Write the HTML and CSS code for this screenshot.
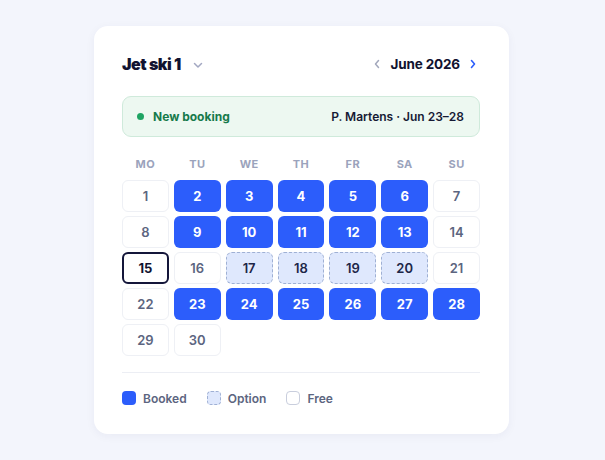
FILE: index.html
```html
<!DOCTYPE html>
<html lang="en">
<head>
<meta charset="utf-8">
<link rel="stylesheet" href="styles.css">
</head>
<body>
<div class="card">
  <div class="header">
    <div class="title">
      <span class="name">Jet ski 1</span>
      <svg class="chev-down" width="12" height="12" viewBox="0 0 12 12"><polyline points="2.5,4.5 6,8 9.5,4.5" fill="none" stroke="#a3a8c2" stroke-width="1.5" stroke-linecap="round" stroke-linejoin="round"/></svg>
    </div>
    <div class="month">
      <svg width="10" height="12" viewBox="0 0 10 12"><polyline points="6.5,2.5 3.5,6 6.5,9.5" fill="none" stroke="#a3a8bc" stroke-width="1.5" stroke-linecap="round" stroke-linejoin="round"/></svg>
      <span class="month-label">June 2026</span>
      <svg width="10" height="12" viewBox="0 0 10 12"><polyline points="3.5,2.5 6.5,6 3.5,9.5" fill="none" stroke="#2c5dfb" stroke-width="1.6" stroke-linecap="round" stroke-linejoin="round"/></svg>
    </div>
  </div>
  <div class="banner">
    <div class="banner-left"><span class="dot"></span><span>New booking</span></div>
    <div class="banner-right">P. Martens · Jun 23–28</div>
  </div>
  <div class="weekdays">
    <span>MO</span><span>TU</span><span>WE</span><span>TH</span><span>FR</span><span>SA</span><span>SU</span>
  </div>
  <div class="grid">
    <div class="day free">1</div>
    <div class="day booked">2</div>
    <div class="day booked">3</div>
    <div class="day booked">4</div>
    <div class="day booked">5</div>
    <div class="day booked">6</div>
    <div class="day free">7</div>
    <div class="day free">8</div>
    <div class="day booked">9</div>
    <div class="day booked">10</div>
    <div class="day booked">11</div>
    <div class="day booked">12</div>
    <div class="day booked">13</div>
    <div class="day free">14</div>
    <div class="day today">15</div>
    <div class="day free">16</div>
    <div class="day option">17</div>
    <div class="day option">18</div>
    <div class="day option">19</div>
    <div class="day option">20</div>
    <div class="day free">21</div>
    <div class="day free">22</div>
    <div class="day booked">23</div>
    <div class="day booked">24</div>
    <div class="day booked">25</div>
    <div class="day booked">26</div>
    <div class="day booked">27</div>
    <div class="day booked">28</div>
    <div class="day free">29</div>
    <div class="day free">30</div>
  </div>
  <div class="divider"></div>
  <div class="legend">
    <div class="legend-item"><span class="sw sw-booked"></span>Booked</div>
    <div class="legend-item"><span class="sw sw-option"></span>Option</div>
    <div class="legend-item"><span class="sw sw-free"></span>Free</div>
  </div>
</div>
</body>
</html>
```
FILE: styles.css
```css
* { box-sizing: border-box; }
html, body { margin: 0; padding: 0; }
body {
  background: #f3f5fc;
  font-family: Inter, "Noto Sans", sans-serif;
  min-height: 100vh;
  padding-right: 2px;
  display: flex;
  align-items: center;
  justify-content: center;
}
.card {
  width: 415px;
  height: 408px;
  background: #ffffff;
  border-radius: 14px;
  box-shadow: 0 2px 10px rgba(30, 40, 90, 0.05);
  padding: 28px 29px 28px 28px;
  display: flex;
  flex-direction: column;
}
.header {
  height: 20px;
  display: flex;
  align-items: center;
  justify-content: space-between;
}
.title { display: flex; align-items: center; gap: 11px; }
.name {
  font-size: 16px;
  font-weight: 900;
  letter-spacing: -0.03em;
  color: #111330;
}
.chev-down { margin-top: 1px; }
.month { display: flex; align-items: center; gap: 8px; padding-right: 2px; }
.month-label {
  font-size: 13.5px;
  font-weight: 700;
  color: #111330;
  letter-spacing: -0.01em;
}
.banner {
  margin-top: 22px;
  height: 41px;
  border-radius: 9px;
  background: #edf8f1;
  border: 1px solid #cfeadb;
  display: flex;
  align-items: center;
  justify-content: space-between;
  padding: 0 15px 0 14px;
  font-size: 12px;
}
.banner-left {
  display: flex;
  align-items: center;
  gap: 9px;
  color: #167a4b;
  font-weight: 700;
}
.dot { width: 7px; height: 7px; border-radius: 50%; background: #1fa463; }
.banner-right { color: #161a35; font-weight: 600; }
.weekdays {
  margin-top: 20px;
  height: 14px;
  display: grid;
  grid-template-columns: repeat(7, 1fr);
  column-gap: 5px;
  font-size: 11px;
  font-weight: 700;
  letter-spacing: 0.04em;
  color: #9ba3bc;
  text-align: center;
  line-height: 14px;
}
.grid {
  margin-top: 9px;
  display: grid;
  grid-template-columns: repeat(7, 1fr);
  grid-auto-rows: 32px;
  column-gap: 5px;
  row-gap: 4px;
}
.day {
  border-radius: 6px;
  display: flex;
  align-items: center;
  justify-content: center;
  font-size: 13px;
}
.free {
  background: #fff;
  border: 1px solid #eef0f5;
  color: #5c6580;
  font-weight: 600;
}
.booked {
  background: #2c5dfb;
  color: #fff;
  font-weight: 700;
}
.option {
  background: #dfe8fd;
  border: 1px dashed #9fb0d4;
  color: #1d2648;
  font-weight: 600;
}
.today {
  background: #fff;
  border: 2px solid #14163a;
  color: #111330;
  font-weight: 700;
}
.divider {
  margin-top: 16px;
  height: 1px;
  background: #eceef4;
}
.legend {
  margin-top: 17px;
  height: 16px;
  display: flex;
  align-items: center;
  gap: 20px;
}
.legend-item {
  display: flex;
  align-items: center;
  gap: 7px;
  font-size: 12px;
  font-weight: 600;
  color: #5c6580;
}
.sw { width: 14px; height: 14px; border-radius: 4px; display: inline-block; }
.sw-booked { background: #2c5dfb; }
.sw-option { background: #dfe8fd; border: 1px dashed #9fb0d4; }
.sw-free { background: #fff; border: 1px solid #c9cedd; }
```
